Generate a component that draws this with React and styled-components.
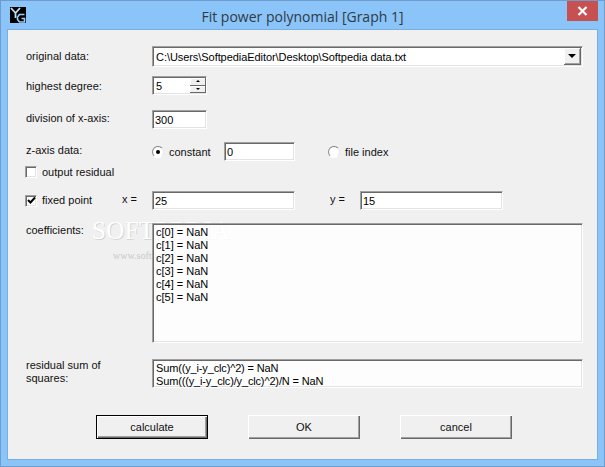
import styled, { createGlobalStyle, css } from "styled-components";

const GlobalStyle = createGlobalStyle`
  html, body {
    margin: 0;
    padding: 0;
    background: #8ac4f9;
  }
  * {
    box-sizing: border-box;
  }
`;

const sunken = css`
  border-style: solid;
  border-width: 1px;
  border-color: #a0a0a0 #fff #fff #a0a0a0;
  box-shadow: inset 1px 1px 0 #696969, inset -1px -1px 0 #e3e3e3;
`;

const App = () => {
  return (
    <Window>
      <GlobalStyle />
      <TitleBar>
        <Logo viewBox="0 0 16 16">
          <rect width="16" height="16" fill="#000" />
          <path d="M1 1 L5.5 6 L10 1 M5.5 6 V11" fill="none" stroke="#bfe0fb" strokeWidth="1.8" />
          <path d="M14.5 7.5 H9.5 L7.5 10 V12.5 L9.5 15 H14.5 V11.5 H11.5" fill="none" stroke="#9ccbf3" strokeWidth="1.6" />
        </Logo>
        <Title>Fit power polynomial [Graph 1]</Title>
        <CloseBtn>
          <svg width="11" height="10" viewBox="0 0 11 10">
            <path d="M1.5 1 L9.5 9 M9.5 1 L1.5 9" stroke="#fff" strokeWidth="2.2" />
          </svg>
        </CloseBtn>
      </TitleBar>
      <Client>
        <Row $top={16}>
          <Label>original data:</Label>
          <Combo>
            <ComboText>C:\Users\SoftpediaEditor\Desktop\Softpedia data.txt</ComboText>
            <ComboArrow>
              <Arrow $size={4} />
            </ComboArrow>
          </Combo>
        </Row>
        <Row $top={9}>
          <Label $dy={2}>highest degree:</Label>
          <Spinner>
            <SpinText>5</SpinText>
            <SpinBtns>
              <SpinBtn><Arrow $up $size={2} /></SpinBtn>
              <SpinBtn><Arrow $size={2} /></SpinBtn>
            </SpinBtns>
          </Spinner>
        </Row>
        <Row $top={15}>
          <Label $dy={-3}>division of x-axis:</Label>
          <Input $w={55} readOnly value="300" />
        </Row>
        <Row $top={13}>
          <Label $dy={-2}>z-axis data:</Label>
          <Radio $on />
          <OptionText $w={60}>constant</OptionText>
          <Input $w={71} readOnly value="0" />
          <Radio $left={33} />
          <OptionText>file index</OptionText>
        </Row>
        <Row $top={5} $h={12}>
          <Check />
          <OptionText $w={90}>output residual</OptionText>
        </Row>
        <Row $top={13}>
          <Check $on>
            <svg width="9" height="9" viewBox="0 0 9 9">
              <path d="M1 4 L3.5 6.5 L8 1.5" fill="none" stroke="#000" strokeWidth="2" />
            </svg>
          </Check>
          <OptionText $w={85} $dy={-2}>fixed point</OptionText>
          <EqLabel $w={30} $dy={-3}>x =</EqLabel>
          <Input $w={143} readOnly value="25" />
          <EqLabel $left={35} $w={30} $dy={-3}>y =</EqLabel>
          <Input $w={143} readOnly value="15" />
        </Row>
        <Row $top={13} $h={120} $align="flex-start">
          <Label $pad={1}>coefficients:</Label>
          <TextBox
            readOnly
            value={"c[0] = NaN\nc[1] = NaN\nc[2] = NaN\nc[3] = NaN\nc[4] = NaN\nc[5] = NaN"}
          />
        </Row>
        <Row $top={16} $h={29} $align="flex-start">
          <Label>residual sum of squares:</Label>
          <TextBox
            $tight
            readOnly
            value={"Sum((y_i-y_clc)^2) = NaN\nSum(((y_i-y_clc)/y_clc)^2)/N = NaN"}
          />
        </Row>
        <ButtonRow>
          <Btn $primary>calculate</Btn>
          <Btn>OK</Btn>
          <Btn>cancel</Btn>
        </ButtonRow>
        <Watermark>
          SOFTPEDIA
          <WatermarkUrl>www.softpedia.com</WatermarkUrl>
        </Watermark>
      </Client>
    </Window>
  );
};
export default App;

const Window = styled.div`
  width: 605px;
  height: 467px;
  display: flex;
  flex-direction: column;
  background: #8ac4f9;
  border: 1px solid #6f9ccb;
  font-family: "Liberation Sans", Arial, sans-serif;
  font-size: 11px;
  color: #000;
  overflow: hidden;
`;
const TitleBar = styled.div`
  position: relative;
  height: 29px;
  flex: none;
  display: flex;
  align-items: center;
  justify-content: center;
`;
const Logo = styled.svg`
  position: absolute;
  left: 9px;
  top: 6px;
  width: 16px;
  height: 16px;
`;
const Title = styled.div`
  font-family: "Open Sans", "Noto Sans", sans-serif;
  font-size: 14px;
  color: #2f3a45;
  padding-top: 1px;
`;
const CloseBtn = styled.div`
  position: absolute;
  right: 6px;
  top: 0;
  width: 31px;
  height: 20px;
  background: #c75050;
  display: flex;
  align-items: center;
  justify-content: center;
`;
const Client = styled.div`
  position: relative;
  flex: 1;
  margin: 0 7px 7px 7px;
  padding: 0 14px 0 18px;
  background: #f0f0f0;
  box-shadow: 0 0 0 1px #78aee0;
  overflow: hidden;
`;
const Row = styled.div`
  display: flex;
  align-items: ${(p) => p.$align || "center"};
  height: ${(p) => p.$h || 19}px;
  margin-top: ${(p) => p.$top}px;
  &:first-child {
    height: 21px;
  }
`;
const Label = styled.div`
  width: 126px;
  flex: none;
  padding-right: 12px;
  padding-top: ${(p) => p.$pad || 0}px;
  margin-top: ${(p) => p.$dy || 0}px;
  line-height: 13px;
  color: #111;
`;
const Combo = styled.div`
  ${sunken}
  flex: 1;
  height: 21px;
  background: #fff;
  display: flex;
  align-items: center;
  justify-content: space-between;
  padding: 1px;
`;
const ComboText = styled.span`
  padding-left: 2px;
  letter-spacing: -0.06px;
`;
const ComboArrow = styled.div`
  width: 17px;
  height: 17px;
  background: #f0f0f0;
  border-right: 1px solid #696969;
  border-bottom: 1px solid #696969;
  box-shadow: inset 1px 1px 0 #fff, inset -1px -1px 0 #a0a0a0;
  display: flex;
  align-items: center;
  justify-content: center;
`;
const Arrow = styled.i`
  display: block;
  width: 0;
  height: 0;
  border-left: ${(p) => p.$size}px solid transparent;
  border-right: ${(p) => p.$size}px solid transparent;
  ${(p) =>
    p.$up
      ? css`border-bottom: ${p.$size}px solid #000;`
      : css`border-top: ${p.$size}px solid #000;`}
`;
const Spinner = styled.div`
  ${sunken}
  width: 55px;
  height: 19px;
  background: #fff;
  display: flex;
  padding: 1px;
`;
const SpinText = styled.div`
  flex: 1;
  padding: 2px 0 0 2px;
`;
const SpinBtns = styled.div`
  width: 16px;
  display: flex;
  flex-direction: column;
  margin-right: -1px;
`;
const SpinBtn = styled.div`
  flex: 1;
  background: #f0f0f0;
  border-right: 1px solid #696969;
  border-bottom: 1px solid #696969;
  box-shadow: inset 1px 1px 0 #fff;
  display: flex;
  align-items: center;
  justify-content: center;
`;
const Input = styled.input`
  ${sunken}
  width: ${(p) => p.$w}px;
  height: 19px;
  flex: none;
  padding: 1px 2px 0 2px;
  background: #fff;
  font: inherit;
  color: #000;
  outline: none;
`;
const TextBox = styled.textarea`
  ${sunken}
  position: relative;
  z-index: 2;
  flex: 1;
  height: 100%;
  padding: 2px 3px;
  background: rgba(255, 255, 255, 0.82);
  font: inherit;
  line-height: 13px;
  letter-spacing: ${(p) => (p.$tight ? "-0.15px" : "0")};
  color: #000;
  resize: none;
  overflow: hidden;
  outline: none;
`;
const Radio = styled.span`
  position: relative;
  width: 12px;
  height: 12px;
  flex: none;
  margin-left: ${(p) => p.$left || 0}px;
  border-radius: 50%;
  background: #fff;
  border: 1px solid;
  border-color: #7a7a7a #e8e8e8 #fff #8a8a8a;
  ${(p) =>
    p.$on &&
    css`
      &::after {
        content: "";
        position: absolute;
        left: 3px;
        top: 3px;
        width: 4px;
        height: 4px;
        border-radius: 50%;
        background: #000;
      }
    `}
`;
const Check = styled.span`
  width: 12px;
  height: 12px;
  flex: none;
  margin-left: -1px;
  ${sunken}
  background: #fff;
  display: flex;
  align-items: center;
  justify-content: center;
`;
const OptionText = styled.span`
  width: ${(p) => (p.$w ? p.$w + "px" : "auto")};
  flex: none;
  padding-left: 5px;
  margin-top: ${(p) => p.$dy || 0}px;
  color: #111;
`;
const EqLabel = styled.span`
  width: ${(p) => p.$w}px;
  flex: none;
  margin-left: ${(p) => p.$left || 0}px;
  margin-top: ${(p) => p.$dy || 0}px;
  color: #111;
`;
const ButtonRow = styled.div`
  display: flex;
  gap: 40px;
  margin-top: 27px;
  padding-left: 70px;
`;
const Btn = styled.div`
  width: 112px;
  height: 24px;
  background: #f0f0f0;
  display: flex;
  align-items: center;
  justify-content: center;
  color: #111;
  box-shadow: inset 1px 1px 0 #fff, inset -1px -1px 0 #696969, inset -2px -2px 0 #a0a0a0;
  ${(p) => p.$primary && css`border: 1px solid #000;`}
`;
const Watermark = styled.div`
  position: absolute;
  z-index: 1;
  left: 84px;
  top: 188px;
  font-family: "Liberation Serif", serif;
  font-size: 25px;
  letter-spacing: 0.4px;
  line-height: 26px;
  color: #fff;
  text-shadow: 1px 1px 0 rgba(190, 190, 190, 0.55);
  pointer-events: none;
`;
const WatermarkUrl = styled.div`
  font-size: 10px;
  letter-spacing: 0;
  line-height: 12px;
  margin: 6px 0 0 21px;
  color: #c8c8c8;
  text-shadow: none;
`;
